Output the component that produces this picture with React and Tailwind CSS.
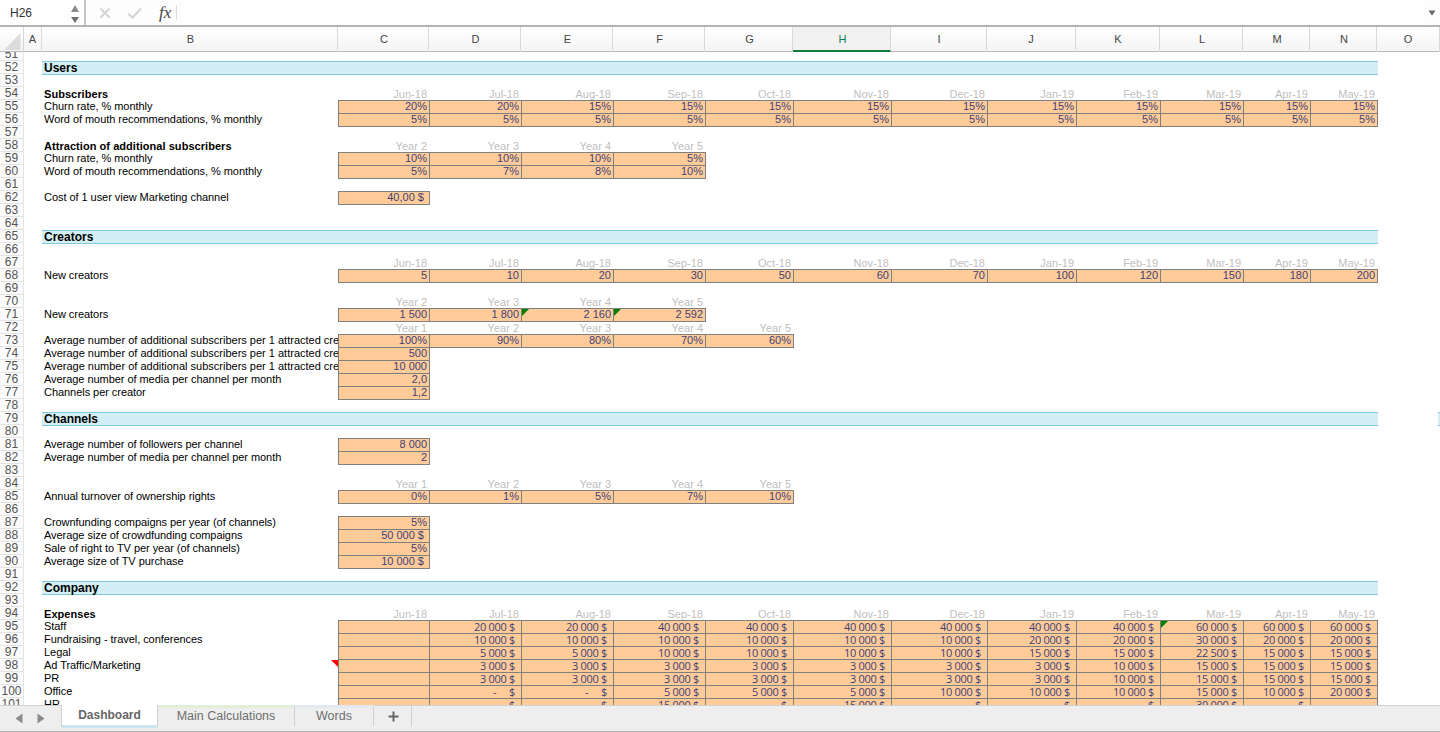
import React from "react";

const MONTHS = ["Jun-18","Jul-18","Aug-18","Sep-18","Oct-18","Nov-18","Dec-18","Jan-19","Feb-19","Mar-19","Apr-19","May-19"];
const GRID = "grid grid-cols-[24px_18px_296px_91px_92px_92px_92px_88px_98px_96px_89px_84px_83px_67px_67px_1fr] h-[13px]";
const LONG = "Average number of additional subscribers per 1 attracted creator";

function Rn({ n }) {
  return (
    <div className="h-[13px] bg-[#fbfbfb] border-b border-r border-[#e4e4e4] flex items-center justify-center text-[12px] leading-[12px] text-[#555555]">
      {n}
    </div>
  );
}

function Label({ text, bold }) {
  const track = bold ? "font-bold pt-[1px] tracking-[0.05px]" : text === LONG ? "" : "tracking-[-0.05px]";
  return (
    <div className={`pl-[2px] text-[11px] leading-[13px] whitespace-nowrap overflow-hidden text-black ${track}`}>
      {text}
    </div>
  );
}

function Input({ v, last, corner, money, bottom }) {
  return (
    <div className={`relative h-[14px] bg-[#ffcc99] border-l border-t border-[#7f7f7f] text-right text-[#3f3f76] whitespace-nowrap overflow-hidden ${last ? "border-r -mr-px" : ""} ${money ? "font-['Open_Sans',sans-serif] text-[11px] tracking-[-0.3px] leading-[12px] pr-[6px]" : "text-[11px] leading-[11px] pr-[2px]"} ${bottom ? "border-b" : ""}`}>
      {v}
      {corner && <span className="absolute left-0 top-0 w-0 h-0 border-t-[7px] border-r-[7px] border-t-[#008000] border-r-transparent" />}
    </div>
  );
}

function Head({ v }) {
  return <div className="text-right pr-[2px] text-[11px] leading-[14px] text-[#c0c0c0] whitespace-nowrap">{v}</div>;
}

function Row({ n, children }) {
  return (
    <div className={GRID}>
      <Rn n={n} />
      <div />
      {children}
    </div>
  );
}

function Band({ n, title, edge }) {
  return (
    <div className={GRID}>
      <Rn n={n} />
      <div />
      <div className="col-span-13 -mr-px h-[14px] bg-[#d3eef4] border-y border-[#7fc9d8] pl-[2px] text-[12px] leading-[12px] font-bold text-black z-10">
        {title}
      </div>
      {edge && (
        <div className="flex justify-end">
          <div className="w-[2px] h-[14px] bg-[#d3eef4] border-y border-[#7fc9d8]" />
        </div>
      )}
    </div>
  );
}

function Blank({ n }) {
  return <Row n={n} />;
}

function Heads({ n, label, bold, values }) {
  return (
    <Row n={n}>
      <Label text={label || ""} bold={bold} />
      {values.map((v, i) => <Head key={i} v={v} />)}
    </Row>
  );
}

function Inputs({ n, label, values, bottom, corners = [], money, note }) {
  return (
    <Row n={n}>
      <div className="relative overflow-hidden">
        <Label text={label} />
        {note && <span className="absolute right-0 top-[1px] w-0 h-0 border-t-[7px] border-l-[7px] border-t-[#ff0000] border-l-transparent" />}
      </div>
      {values.map((v, i) => (
        <Input key={i} v={v} last={i === values.length - 1} bottom={bottom} corner={corners.includes(i)} money={money} />
      ))}
    </Row>
  );
}

const pct = (a) => a.map((x) => x + "%");

function Money({ n, label, values, note, corners }) {
  return <Inputs n={n} label={label} values={values} money note={note} corners={corners} />;
}

const D = "-\u00A0\u00A0\u00A0\u00A0\u00A0$";

function FormulaBar() {
  return (
    <div className="h-[25px] flex items-center bg-[#fdfdfd] shrink-0">
      <div className="w-[86px] h-full bg-white flex items-center justify-between pl-[10px] pr-[4px] text-[12px] text-[#333333] border-r-2 border-[#c4c4c4]">
        <span className="pt-[1px]">H26</span>
        <svg width="10" height="21" viewBox="0 0 10 21">
          <path d="M5 3 L9 10 L1 10 Z" fill="#8a8a8a" />
          <path d="M5 21 L9 15 L1 15 Z" fill="#6f6f6f" />
        </svg>
      </div>
      <div className="w-[96px] h-full flex items-center pl-[13px]">
        <svg width="12" height="12" viewBox="0 0 12 12" className="shrink-0">
          <path d="M1.5 1.5 L10.5 10.5 M10.5 1.5 L1.5 10.5" stroke="#d4d4d4" strokeWidth="2" fill="none" />
        </svg>
        <svg width="15" height="12" viewBox="0 0 15 12" className="ml-[16px] shrink-0">
          <path d="M1 6.5 L5.5 10.5 L14 1.5" stroke="#d4d4d4" strokeWidth="2" fill="none" />
        </svg>
        <span className="ml-[17px] text-[17px] leading-[20px] italic text-[#444444] font-['Liberation_Serif',serif]">fx</span>
        <div className="ml-[5px] w-px h-[15px] bg-[#dddddd]" />
      </div>
      <div className="flex-1 h-full bg-white" />
      <svg width="8" height="6" viewBox="0 0 8 6" className="mr-[4px] ml-[4px]">
        <path d="M0.5 0.5 L7.5 0.5 L4 5.5 Z" fill="#666666" />
      </svg>
    </div>
  );
}

const COLS = [
  ["A", ""],
  ["B", "pl-[2px]"],
  ["C", "pl-[2px]"],
  ["D", "pl-[2px]"],
  ["E", "pl-[2px]"],
  ["F", "pl-[2px]"],
  ["G", "pl-[2px]"],
  ["H", "pl-[2px]"],
  ["I", "pl-[1px]"],
  ["J", ""],
  ["K", "pl-[1px]"],
  ["L", "pl-[2px]"],
  ["M", "pl-[2px]"],
  ["N", "pl-[2px]"],
  ["O", ""],
];

function ColHeader() {
  return (
    <div className="h-[27px] shrink-0 border-t-[2px] border-b border-t-[#b4b4b4] border-b-[#b8b8b8] grid grid-cols-[24px_18px_296px_91px_92px_92px_92px_88px_98px_96px_89px_84px_83px_67px_67px_1fr] bg-[linear-gradient(#ffffff,#f4f4f4)] text-[11px] text-[#444444] z-20 relative">
      <div className="border-r border-[#d6d6d6] relative overflow-hidden">
        <svg width="24" height="24" viewBox="0 0 24 24" className="block">
          <path d="M20.5 6 L20.5 23 L4 23 Z" fill="#dcdcdc" />
        </svg>
      </div>
      {COLS.map(([c, pad]) => (
        <div key={c} className={`flex items-center justify-center border-r border-[#d9d9d9] ${pad} ${c === "H" ? "bg-[#f1f1f1] text-[#0d7a4c] border-b-2 border-b-[#107c41] h-[25px] pt-[1px]" : ""}`}>
          {c}
        </div>
      ))}
    </div>
  );
}

function Tabs() {
  return (
    <div className="h-[27px] shrink-0 bg-[#eeeeee] border-t border-[#d0d0d0] border-b border-b-[#b4b4b4] flex items-stretch text-[12.5px] text-[#6e6e6e] relative z-20">
      <div className="w-[61px] flex items-center pl-[15px] pb-[1px]">
        <svg width="8" height="11" viewBox="0 0 8 11"><path d="M7.5 0.5 L7.5 10.5 L0.5 5.5 Z" fill="#8c8c8c" /></svg>
        <svg width="8" height="11" viewBox="0 0 8 11" className="ml-[14px]"><path d="M0.5 0.5 L0.5 10.5 L7.5 5.5 Z" fill="#8c8c8c" /></svg>
      </div>
      <div className="w-[97px] -mt-px h-[23px] bg-white border-l border-r border-[#cfcfcf] border-b-[3px] border-b-[#c9e6ec] rounded-b-[2px] flex items-center justify-center text-[12px] font-bold text-[#666666]">
        Dashboard
      </div>
      <div className="w-[137px] h-[21px] -mt-px border-t-[3px] border-t-[#e2eed8] border-r border-r-[#cfcfcf] flex items-center justify-center pb-[1px]">
        Main Calculations
      </div>
      <div className="w-[79px] h-[21px] -mt-px border-t-[3px] border-t-[#e4e8f2] border-r border-r-[#cfcfcf] flex items-center justify-center pb-[1px]">
        Words
      </div>
      <div className="w-[38px] h-[21px] border-r border-r-[#cfcfcf] flex items-center justify-center pl-[1px]">
        <svg width="11" height="11" viewBox="0 0 11 11"><path d="M5.5 0.5 V10.5 M0.5 5.5 H10.5" stroke="#666666" strokeWidth="2" /></svg>
      </div>
    </div>
  );
}

export default function App() {
  return (
    <div className="w-[1440px] h-[732px] overflow-hidden bg-white flex flex-col font-['Liberation_Sans',sans-serif]">
      <FormulaBar />
      <ColHeader />
      <div className="flex-1 overflow-hidden bg-white">
        <div className="-mt-[4px]">
          <Blank n={51} />
          <Band n={52} title="Users" />
          <Blank n={53} />
          <Heads n={54} label="Subscribers" bold values={MONTHS} />
          <Inputs n={55} label="Churn rate, % monthly" values={pct([20,20,15,15,15,15,15,15,15,15,15,15])} />
          <Inputs n={56} label="Word of mouth recommendations, % monthly" bottom values={pct([5,5,5,5,5,5,5,5,5,5,5,5])} />
          <Blank n={57} />
          <Heads n={58} label="Attraction of additional subscribers" bold values={["Year 2","Year 3","Year 4","Year 5"]} />
          <Inputs n={59} label="Churn rate, % monthly" values={pct([10,10,10,5])} />
          <Inputs n={60} label="Word of mouth recommendations, % monthly" bottom values={pct([5,7,8,10])} />
          <Blank n={61} />
          <Inputs n={62} label="Cost of 1 user view Marketing channel" bottom values={["40,00 $\u00A0"]} />
          <Blank n={63} />
          <Blank n={64} />
          <Band n={65} title="Creators" />
          <Blank n={66} />
          <Heads n={67} values={MONTHS} />
          <Inputs n={68} label="New creators" bottom values={["5","10","20","30","50","60","70","100","120","150","180","200"]} />
          <Blank n={69} />
          <Heads n={70} values={["Year 2","Year 3","Year 4","Year 5"]} />
          <Inputs n={71} label="New creators" bottom corners={[2,3]} values={["1 500","1 800","2 160","2 592"]} />
          <Heads n={72} values={["Year 1","Year 2","Year 3","Year 4","Year 5"]} />
          <Inputs n={73} label={LONG} values={pct([100,90,80,70,60])} bottom />
          <Inputs n={74} label={LONG} values={["500"]} />
          <Inputs n={75} label={LONG} values={["10 000"]} />
          <Inputs n={76} label="Average number of media per channel per month" values={["2,0"]} />
          <Inputs n={77} label="Channels per creator" bottom values={["1,2"]} />
          <Blank n={78} />
          <Band n={79} title="Channels" edge />
          <Blank n={80} />
          <Inputs n={81} label="Average number of followers per channel" values={["8 000"]} />
          <Inputs n={82} label="Average number of media per channel per month" bottom values={["2"]} />
          <Blank n={83} />
          <Heads n={84} values={["Year 1","Year 2","Year 3","Year 4","Year 5"]} />
          <Inputs n={85} label="Annual turnover of ownership rights" bottom values={pct([0,1,5,7,10])} />
          <Blank n={86} />
          <Inputs n={87} label="Crownfunding compaigns per year (of channels)" values={["5%"]} />
          <Inputs n={88} label="Average size of crowdfunding compaigns" values={["50 000 $\u00A0"]} />
          <Inputs n={89} label="Sale of right to TV per year (of channels)" values={["5%"]} />
          <Inputs n={90} label="Average size of TV purchase" bottom values={["10 000 $\u00A0"]} />
          <Blank n={91} />
          <Band n={92} title="Company" />
          <Blank n={93} />
          <Heads n={94} label="Expenses" bold values={MONTHS} />
          <Money n={95} label="Staff" corners={[9]} values={["","20 000 $","20 000 $","40 000 $","40 000 $","40 000 $","40 000 $","40 000 $","40 000 $","60 000 $","60 000 $","60 000 $"]} />
          <Money n={96} label="Fundraising - travel, conferences" values={["","10 000 $","10 000 $","10 000 $","10 000 $","10 000 $","10 000 $","20 000 $","20 000 $","30 000 $","20 000 $","20 000 $"]} />
          <Money n={97} label="Legal" values={["","5 000 $","5 000 $","10 000 $","10 000 $","10 000 $","10 000 $","15 000 $","15 000 $","22 500 $","15 000 $","15 000 $"]} />
          <Money n={98} label="Ad Traffic/Marketing" note values={["","3 000 $","3 000 $","3 000 $","3 000 $","3 000 $","3 000 $","3 000 $","10 000 $","15 000 $","15 000 $","15 000 $"]} />
          <Money n={99} label="PR" values={["","3 000 $","3 000 $","3 000 $","3 000 $","3 000 $","3 000 $","3 000 $","10 000 $","15 000 $","15 000 $","15 000 $"]} />
          <Money n={100} label="Office" values={["",D,D,"5 000 $","5 000 $","5 000 $","10 000 $","10 000 $","10 000 $","15 000 $","10 000 $","20 000 $"]} />
          <Money n={101} label="HR" values={["",D,D,"15 000 $",D,"15 000 $",D,D,D,"30 000 $",D,""]} />
        </div>
      </div>
      <Tabs />
    </div>
  );
}
